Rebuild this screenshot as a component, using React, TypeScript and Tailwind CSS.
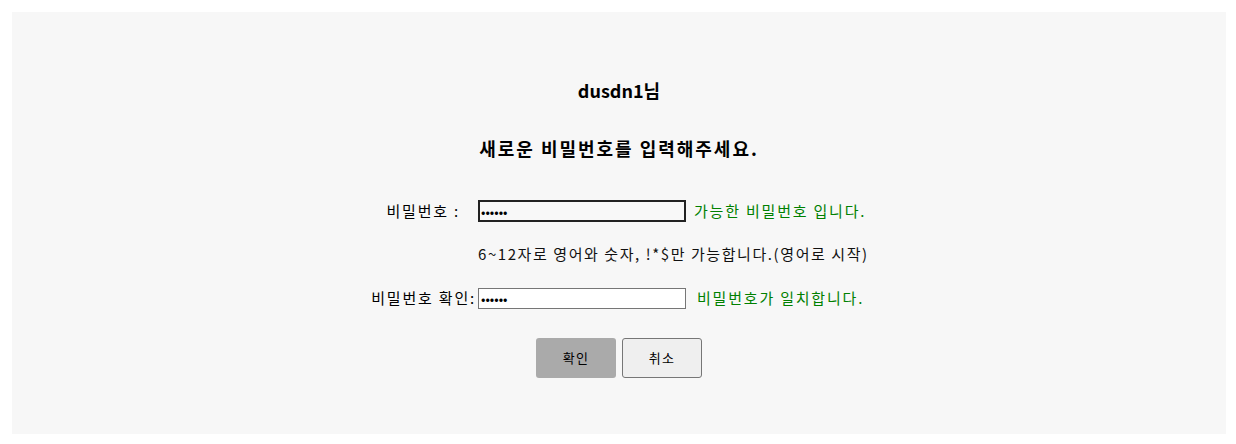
import { useState } from "react";

const font = "font-['Noto_Sans_CJK_KR','Noto_Sans',sans-serif]";

export default function App() {
  const [pw, setPw] = useState("abc123");
  const [pwCheck, setPwCheck] = useState("abc123");

  return (
    <div className={`pb-[10px] pl-3 pr-[10px] pt-3 ${font}`}>
      <div className="flex h-[422px] flex-col items-center bg-[#f7f7f7] text-black">
        <h2 className="mt-[66px] text-[18px] font-bold leading-[24px]">dusdn1님</h2>
        <h3 className="mt-[34px] text-[18px] font-bold leading-[24px] tracking-[0.11em]">
          새로운 비밀번호를 입력해주세요.
        </h3>

        {/* 비밀번호 입력 */}
        <div className="mt-[40px] grid w-[522px] grid-cols-[120px_208px_194px] items-center text-[15px] tracking-[0.12em]">
          <label className="whitespace-nowrap pr-[18px] text-right leading-[22px]">비밀번호 :</label>
          <input
            type="password"
            value={pw}
            onChange={(e) => setPw(e.target.value)}
            className="h-[22px] w-[208px] border-2 border-[#222] bg-[#f8f8f8] px-[1px] text-[13px] tracking-normal outline-none"
          />
          <span className="whitespace-nowrap pl-[8px] leading-[22px] text-[#008000]">
            가능한 비밀번호 입니다.
          </span>

          <span />
          <p className="col-span-2 mt-[21px] whitespace-nowrap leading-[22px] tracking-[0.105em] text-[#111]">
            6~12자로 영어와 숫자, !*$만 가능합니다.(영어로 시작)
          </p>

          <label className="mt-[22px] whitespace-nowrap pr-[2px] text-right leading-[22px]">
            비밀번호 확인:
          </label>
          <input
            type="password"
            value={pwCheck}
            onChange={(e) => setPwCheck(e.target.value)}
            className="mt-[22px] h-[21px] w-[208px] border border-[#767676] bg-white px-[2px] text-[13px] tracking-normal outline-none"
          />
          <span className="mt-[22px] whitespace-nowrap pl-[11px] leading-[22px] text-[#008000]">
            비밀번호가 일치합니다.
          </span>
        </div>

        <div className="mt-[29px] flex gap-[6px]">
          <button className="h-[40px] w-[80px] rounded-[3px] bg-[#aaaaaa] text-[13px] tracking-[0.1em] text-black">
            확인
          </button>
          <button className="h-[40px] w-[80px] rounded-[3px] border border-[#767676] bg-[#efefef] text-[13px] tracking-[0.1em] text-black">
            취소
          </button>
        </div>
      </div>
    </div>
  );
}
